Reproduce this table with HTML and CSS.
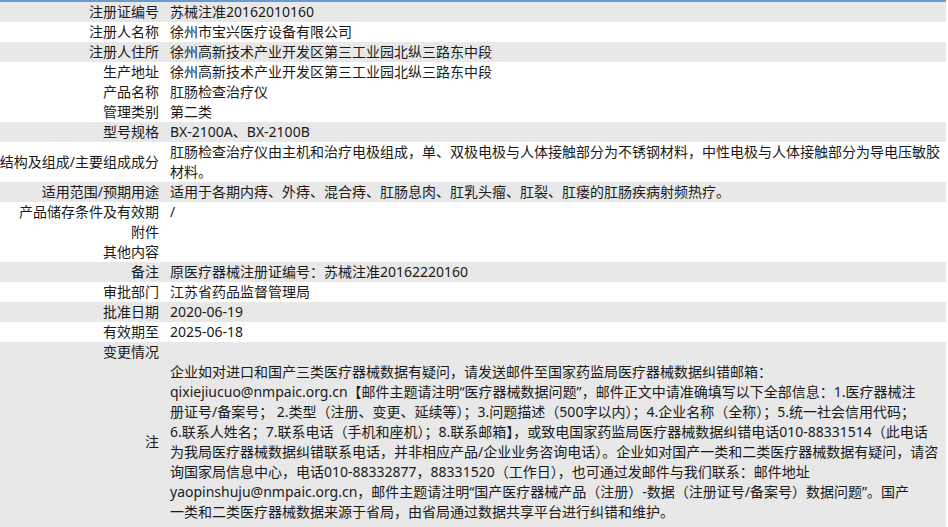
FILE: index.html
```html
<!DOCTYPE html>
<html lang="zh-CN">
<head>
<meta charset="utf-8">
<title>注册证信息</title>
<link rel="stylesheet" href="styles.css">
</head>
<body>
<div class="sheet">
  <div class="row alt"><div class="label"><span>注册证编号</span></div><div class="value">苏械注准20162010160</div></div>
  <div class="row"><div class="label"><span>注册人名称</span></div><div class="value">徐州市宝兴医疗设备有限公司</div></div>
  <div class="row alt"><div class="label"><span>注册人住所</span></div><div class="value">徐州高新技术产业开发区第三工业园北纵三路东中段</div></div>
  <div class="row"><div class="label"><span>生产地址</span></div><div class="value">徐州高新技术产业开发区第三工业园北纵三路东中段</div></div>
  <div class="row"><div class="label"><span>产品名称</span></div><div class="value">肛肠检查治疗仪</div></div>
  <div class="row"><div class="label"><span>管理类别</span></div><div class="value">第二类</div></div>
  <div class="row alt"><div class="label"><span>型号规格</span></div><div class="value">BX-2100A、BX-2100B</div></div>
  <div class="row"><div class="label"><span>结构及组成/主要组成成分</span></div><div class="value">肛肠检查治疗仪由主机和治疗电极组成，单、双极电极与人体接触部分为不锈钢材料，中性电极与人体接触部分为导电压敏胶<br>材料。</div></div>
  <div class="row alt"><div class="label"><span>适用范围/预期用途</span></div><div class="value">适用于各期内痔、外痔、混合痔、肛肠息肉、肛乳头瘤、肛裂、肛瘘的肛肠疾病射频热疗。</div></div>
  <div class="row"><div class="label"><span>产品储存条件及有效期</span></div><div class="value">/</div></div>
  <div class="row"><div class="label"><span>附件</span></div><div class="value"></div></div>
  <div class="row"><div class="label"><span>其他内容</span></div><div class="value"></div></div>
  <div class="row alt"><div class="label"><span>备注</span></div><div class="value">原医疗器械注册证编号：苏械注准20162220160</div></div>
  <div class="row"><div class="label"><span>审批部门</span></div><div class="value">江苏省药品监督管理局</div></div>
  <div class="row alt"><div class="label"><span>批准日期</span></div><div class="value">2020-06-19</div></div>
  <div class="row"><div class="label"><span>有效期至</span></div><div class="value">2025-06-18</div></div>
  <div class="row alt"><div class="label"><span>变更情况</span></div><div class="value"></div></div>
  <div class="row alt note"><div class="label"><span>注</span></div><div class="value">企业如对进口和国产三类医疗器械数据有疑问，请发送邮件至国家药监局医疗器械数据纠错邮箱：<br>qixiejiucuo@nmpaic.org.cn【邮件主题请注明“医疗器械数据问题”，邮件正文中请准确填写以下全部信息：1.医疗器械注<br>册证号/备案号； 2.类型（注册、变更、延续等）；3.问题描述（500字以内）；4.企业名称（全称）；5.统一社会信用代码；<br>6.联系人姓名；7.联系电话（手机和座机）；8.联系邮箱】，或致电国家药监局医疗器械数据纠错电话010-88331514（此电话<br>为我局医疗器械数据纠错联系电话，并非相应产品/企业业务咨询电话）。企业如对国产一类和二类医疗器械数据有疑问，请咨<br>询国家局信息中心，电话010-88332877，88331520（工作日），也可通过发邮件与我们联系：邮件地址<br>yaopinshuju@nmpaic.org.cn，邮件主题请注明“国产医疗器械产品（注册）-数据（注册证号/备案号）数据问题”。国产<br>一类和二类医疗器械数据来源于省局，由省局通过数据共享平台进行纠错和维护。</div></div>
</div>
</body>
</html>
```

FILE: styles.css
```css
html, body {
  margin: 0;
  padding: 0;
  background: #ffffff;
}

body {
  font-family: "Noto Sans", "Noto Sans CJK SC", sans-serif;
  font-size: 14px;
  line-height: 20px;
  color: #1a1a1a;
}

.sheet {
  width: 946px;
  border-top: 2px solid #699bd3;
  overflow: hidden;
}

.row {
  display: grid;
  grid-template-columns: 164px 1fr;
}

.row.alt {
  background: #e8e8e8;
}

.row.note {
  padding-bottom: 12px;
}

.label {
  display: flex;
  justify-content: flex-end;
  align-items: center;
  padding-right: 5px;
  white-space: nowrap;
  min-height: 20px;
}

.label span {
  flex: none;
}

.value {
  padding-left: 6px;
  min-height: 20px;
  white-space: nowrap;
}
```
